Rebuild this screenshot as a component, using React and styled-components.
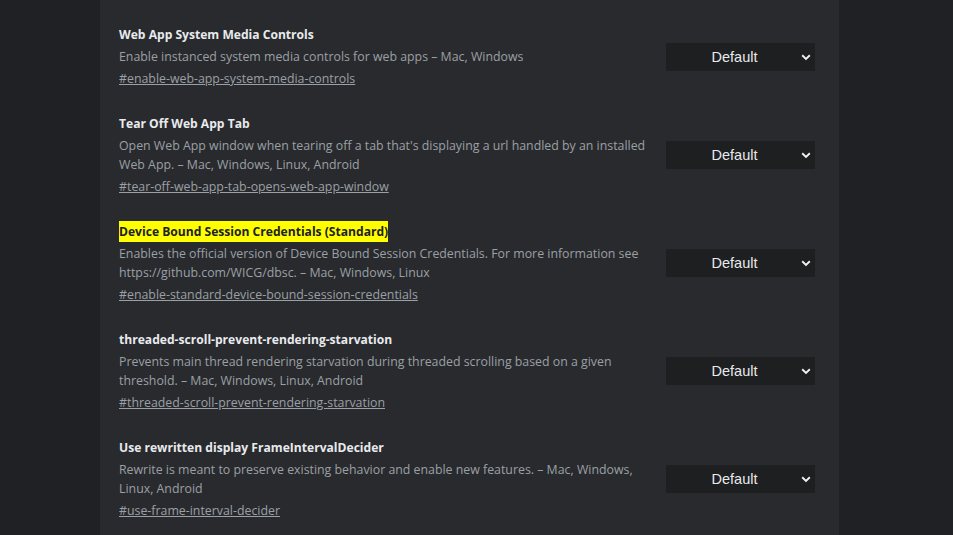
import React from 'react'
import styled, { createGlobalStyle } from 'styled-components'

const Global = createGlobalStyle`
  html, body { margin: 0; padding: 0; background: #202124; }
  body { font-family: "Open Sans", "Noto Sans", sans-serif; }
`

const flags = [
  {
    title: 'Web App System Media Controls',
    desc: ['Enable instanced system media controls for web apps – Mac, Windows'],
    id: 'enable-web-app-system-media-controls',
  },
  {
    title: 'Tear Off Web App Tab',
    desc: [
      "Open Web App window when tearing off a tab that's displaying a url handled by an installed",
      'Web App. – Mac, Windows, Linux, Android',
    ],
    id: 'tear-off-web-app-tab-opens-web-app-window',
  },
  {
    title: 'Device Bound Session Credentials (Standard)',
    highlight: true,
    desc: [
      'Enables the official version of Device Bound Session Credentials. For more information see',
      'https://github.com/WICG/dbsc. – Mac, Windows, Linux',
    ],
    id: 'enable-standard-device-bound-session-credentials',
  },
  {
    title: 'threaded-scroll-prevent-rendering-starvation',
    desc: [
      'Prevents main thread rendering starvation during threaded scrolling based on a given',
      'threshold. – Mac, Windows, Linux, Android',
    ],
    id: 'threaded-scroll-prevent-rendering-starvation',
  },
  {
    title: 'Use rewritten display FrameIntervalDecider',
    desc: [
      'Rewrite is meant to preserve existing behavior and enable new features. – Mac, Windows,',
      'Linux, Android',
    ],
    id: 'use-frame-interval-decider',
  },
]

export default function App() {
  return (
    <>
      <Global />
      <Page>
        <Panel>
          {flags.map((f) => (
            <Experiment key={f.id}>
              <TextCol>
                <Title>
                  <TitleText $hl={f.highlight}>{f.title}</TitleText>
                </Title>
                <Desc>
                  {f.desc.map((l, i) => (
                    <Line key={i}>{l}</Line>
                  ))}
                </Desc>
                <Permalink href={'#' + f.id}>#{f.id}</Permalink>
              </TextCol>
              <Select>
                <span>Default</span>
                <Chevron viewBox="0 0 10 7">
                  <path d="M1.2 1.3 L5 5 L8.8 1.3" fill="none" stroke="#f1f1f1" strokeWidth="1.9" />
                </Chevron>
              </Select>
            </Experiment>
          ))}
        </Panel>
      </Page>
    </>
  )
}

const Page = styled.div`
  width: 953px;
  height: 535px;
  overflow: hidden;
  background: #202124;
  padding-left: 100px;
  box-sizing: border-box;
`

const Panel = styled.div`
  width: 739px;
  height: 100%;
  background: #292a2d;
  box-sizing: border-box;
  padding: 25px 24px 0 19px;
  display: flex;
  flex-direction: column;
  gap: 26px;
`

const Experiment = styled.div`
  display: flex;
  align-items: center;
  justify-content: space-between;
`

const TextCol = styled.div`
  display: flex;
  flex-direction: column;
  width: 535px;
`

const Title = styled.div`
  font-size: 12.1px;
  font-weight: 700;
  line-height: 20px;
  color: #e8eaed;
  margin-bottom: 2px;
`

const TitleText = styled.span`
  background: ${(p) => (p.$hl ? '#ffff00' : 'transparent')};
  color: ${(p) => (p.$hl ? '#202124' : '#e8eaed')};
  padding: 2px 0 2px;
`

const Desc = styled.div`
  font-size: 12.35px;
  line-height: 19px;
  color: #9aa0a6;
  margin-bottom: 3px;
`

const Line = styled.div`
  white-space: nowrap;
`

const Permalink = styled.a`
  font-size: 12.35px;
  line-height: 19px;
  color: #9aa0a6;
  text-decoration: underline;
  align-self: flex-start;
`

const Select = styled.div`
  position: relative;
  width: 149px;
  height: 28px;
  background: #1e1f21;
  display: flex;
  align-items: center;
  justify-content: center;
  font-family: "Liberation Sans", Arial, sans-serif;
  font-size: 14.5px;
  color: #e8eaed;
  span { margin-left: -12px; }
`

const Chevron = styled.svg`
  position: absolute;
  right: 4px;
  top: 11px;
  width: 10px;
  height: 7px;
`
